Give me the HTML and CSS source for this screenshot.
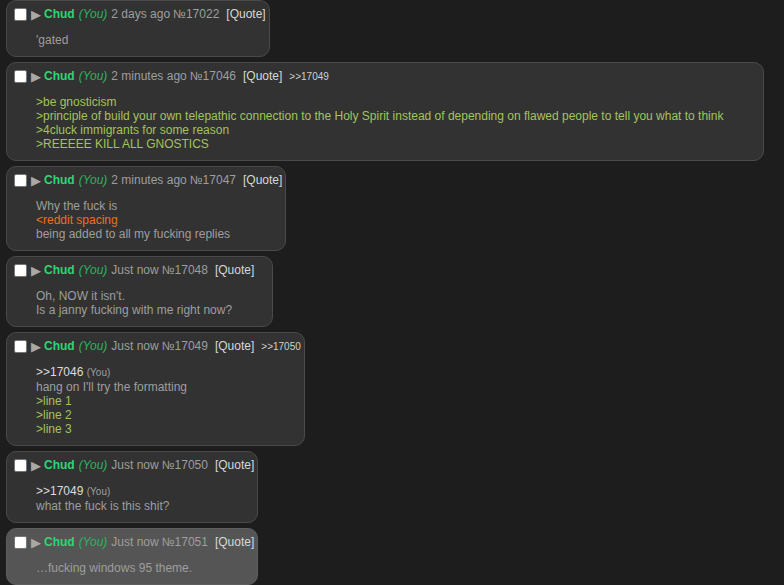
FILE: index.html
```html
<!DOCTYPE html>
<html lang="en">
<head>
    <meta charset="UTF-8">
    <title>Thread</title>
    <link rel="stylesheet" href="styles.css">
</head>
<body>
    <div class="thread">
        <div class="post">
            <div class="post-header">
                <span class="post-check"></span>
                <span class="post-arrow">&#9654;</span>
                <span class="post-name">Chud</span>
                <span class="post-you">(You)</span>
                <span class="post-time">2 days ago</span>
                <span class="post-num">&#8470;17022</span>
                <span class="post-quote">[Quote]</span>
            </div>
            <div class="post-body">
                <div>'gated</div>
            </div>
        </div>

        <div class="post">
            <div class="post-header">
                <span class="post-check"></span>
                <span class="post-arrow">&#9654;</span>
                <span class="post-name">Chud</span>
                <span class="post-you">(You)</span>
                <span class="post-time">2 minutes ago</span>
                <span class="post-num">&#8470;17046</span>
                <span class="post-quote">[Quote]</span>
                <span class="post-backlink">&gt;&gt;17049</span>
            </div>
            <div class="post-body">
                <div class="greentext">&gt;be gnosticism</div>
                <div class="greentext">&gt;principle of build your own telepathic connection to the Holy Spirit instead of depending on flawed people to tell you what to think</div>
                <div class="greentext">&gt;4cluck immigrants for some reason</div>
                <div class="greentext">&gt;REEEEE KILL ALL GNOSTICS</div>
            </div>
        </div>

        <div class="post">
            <div class="post-header">
                <span class="post-check"></span>
                <span class="post-arrow">&#9654;</span>
                <span class="post-name">Chud</span>
                <span class="post-you">(You)</span>
                <span class="post-time">2 minutes ago</span>
                <span class="post-num">&#8470;17047</span>
                <span class="post-quote">[Quote]</span>
            </div>
            <div class="post-body">
                <div>Why the fuck is</div>
                <div class="orangetext">&lt;reddit spacing</div>
                <div>being added to all my fucking replies</div>
            </div>
        </div>

        <div class="post">
            <div class="post-header">
                <span class="post-check"></span>
                <span class="post-arrow">&#9654;</span>
                <span class="post-name">Chud</span>
                <span class="post-you">(You)</span>
                <span class="post-time">Just now</span>
                <span class="post-num">&#8470;17048</span>
                <span class="post-quote">[Quote]</span>
            </div>
            <div class="post-body">
                <div>Oh, NOW it isn't.</div>
                <div>Is a janny fucking with me right now?</div>
            </div>
        </div>

        <div class="post">
            <div class="post-header">
                <span class="post-check"></span>
                <span class="post-arrow">&#9654;</span>
                <span class="post-name">Chud</span>
                <span class="post-you">(You)</span>
                <span class="post-time">Just now</span>
                <span class="post-num">&#8470;17049</span>
                <span class="post-quote">[Quote]</span>
                <span class="post-backlink">&gt;&gt;17050</span>
            </div>
            <div class="post-body">
                <div><span class="quotelink">&gt;&gt;17046</span> <span class="quote-you">(You)</span></div>
                <div>hang on I'll try the formatting</div>
                <div class="greentext">&gt;line 1</div>
                <div class="greentext">&gt;line 2</div>
                <div class="greentext">&gt;line 3</div>
            </div>
        </div>

        <div class="post">
            <div class="post-header">
                <span class="post-check"></span>
                <span class="post-arrow">&#9654;</span>
                <span class="post-name">Chud</span>
                <span class="post-you">(You)</span>
                <span class="post-time">Just now</span>
                <span class="post-num">&#8470;17050</span>
                <span class="post-quote">[Quote]</span>
            </div>
            <div class="post-body">
                <div><span class="quotelink">&gt;&gt;17049</span> <span class="quote-you">(You)</span></div>
                <div>what the fuck is this shit?</div>
            </div>
        </div>

        <div class="post highlighted">
            <div class="post-header">
                <span class="post-check"></span>
                <span class="post-arrow">&#9654;</span>
                <span class="post-name">Chud</span>
                <span class="post-you">(You)</span>
                <span class="post-time">Just now</span>
                <span class="post-num">&#8470;17051</span>
                <span class="post-quote">[Quote]</span>
            </div>
            <div class="post-body">
                <div>&hellip;fucking windows 95 theme.</div>
            </div>
        </div>
    </div>
</body>
</html>
```

FILE: styles.css
```css
body {
    margin: 0;
    background-color: #1d1d1d;
    font-family: "Liberation Sans", Arial, sans-serif;
    font-size: 12px;
    color: #9e9e9e;
    overflow: hidden;
}

.thread {
    display: flex;
    flex-direction: column;
    align-items: flex-start;
    gap: 5px;
    padding: 0 6px;
}

.post {
    background-color: #323232;
    border: 1px solid #4a4a4a;
    border-radius: 10px;
    padding: 3px 3px 9px 7px;
}

.post.highlighted {
    background-color: #555;
    border-color: #5e5e5e;
}

.post-header {
    display: flex;
    align-items: center;
    height: 20px;
    white-space: nowrap;
}

.post-check {
    width: 13px;
    height: 13px;
    background-color: #fff;
    border-radius: 2px;
    box-sizing: border-box;
    border: 1px solid #767676;
    margin-right: 4px;
}

.post-arrow {
    color: #a8a8a8;
    font-size: 13px;
    margin-right: 3px;
}

.post-name {
    color: #2ed573;
    font-weight: bold;
    margin-right: 4px;
}

.post-you {
    color: #2fb25f;
    font-style: italic;
    margin-right: 4px;
}

.post-time {
    margin-right: 3px;
}

.post-num {
    margin-right: 7px;
}

.post-quote {
    color: #d8d8d8;
}

.post-backlink {
    color: #cfcfcf;
    font-size: 10px;
    margin-left: 7px;
}

.post-body {
    margin: 9px 37px 0 22px;
    line-height: 14px;
}

.greentext {
    color: #a3c45a;
}

.orangetext {
    color: #e8711f;
}

.quotelink {
    color: #dcdcdc;
}

.quote-you {
    font-size: 10px;
}
```
